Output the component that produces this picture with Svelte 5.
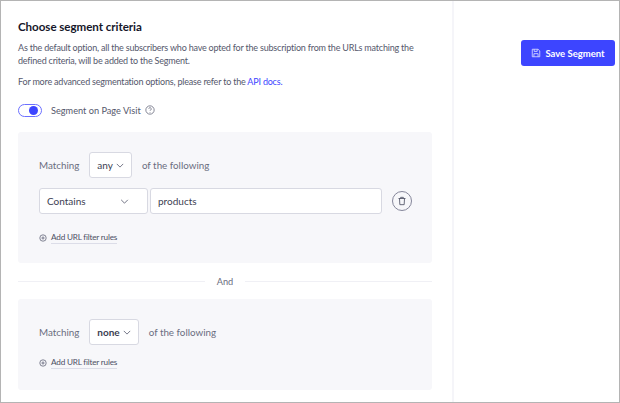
<script>
  // Segment criteria form with a save action in the side column.
  const groups = [
    { match: "any", rows: [{ type: "Contains", value: "products" }] },
    { match: "none", rows: [] },
  ];
</script>

<div class="frame">
  <main class="main">
    <h2>Choose segment criteria</h2>
    <p class="lead">
      As the default option, all the subscribers who have opted for the subscription from the URLs matching the
      defined criteria, will be added to the Segment.
    </p>
    <p class="more">For more advanced segmentation options, please refer to the <a href="#docs">API docs.</a></p>

    <div class="switch-row">
      <span class="switch"><span class="knob"></span></span>
      <span class="switch-label">Segment on Page Visit</span>
      <svg class="help" viewBox="0 0 12 12" width="10" height="10" fill="none" stroke="#5c5f73" stroke-width="0.9">
        <circle cx="6" cy="6" r="5" />
        <path d="M4.5 4.7a1.5 1.5 0 1 1 2.3 1.3c-.5.3-.8.6-.8 1.1" />
        <path d="M6 8.4v.8" />
      </svg>
    </div>

    {#each groups as group, i}
      {#if i > 0}
        <div class="divider"><span>And</span></div>
      {/if}
      <section class="panel" class:second={i > 0}>
        <div class="matching">
          <span>Matching</span>
          <span class="select small">
            {group.match}
            <svg viewBox="0 0 10 6" width="8" height="5" fill="none" stroke="#55586c" stroke-width="1"><path d="M1 1l4 4 4-4" /></svg>
          </span>
          <span>of the following</span>
        </div>
        {#each group.rows as row}
          <div class="rule">
            <span class="select type">
              {row.type}
              <svg viewBox="0 0 10 6" width="9" height="5" fill="none" stroke="#55586c" stroke-width="1"><path d="M1 1l4 4 4-4" /></svg>
            </span>
            <span class="input">{row.value}</span>
            <button class="trash" aria-label="Delete">
              <svg viewBox="0 0 12 12" width="10" height="10" fill="none" stroke="#4c4f63" stroke-width="1">
                <path d="M1.8 3h8.4M4.4 3V1.6h3.2V3M3 3l.4 7.4h5.2L9 3" />
              </svg>
            </button>
          </div>
        {/each}
        <div class="add">
          <svg viewBox="0 0 10 10" width="8" height="8" fill="none" stroke="#55586c" stroke-width="0.9">
            <circle cx="5" cy="5" r="4" /><path d="M5 3v4M3 5h4" />
          </svg>
          <span>Add URL filter rules</span>
        </div>
      </section>
    {/each}
  </main>

  <aside class="side">
    <button class="save">
      <svg viewBox="0 0 12 12" width="10" height="10" fill="none" stroke="#dfe0ff" stroke-width="1">
        <path d="M1.5 1.5h7l2 2v7h-9z" /><path d="M3.8 1.5v2.6h3.6V1.5M3.5 10.5V6.8h5v3.7" />
      </svg>
      Save Segment
    </button>
  </aside>
</div>

<style>
  :global(body) {
    margin: 0;
    background: #fff;
  }
  .frame {
    box-sizing: border-box;
    display: flex;
    width: 620px;
    height: 403px;
    border: 1px solid #b4b4b4;
    font-family: Lato, sans-serif;
    color: #55586c;
    overflow: hidden;
  }
  .main {
    box-sizing: border-box;
    width: 453px;
    height: 100%;
    padding: 18px 20px 0 17px;
    border-right: 2px solid #f5f5f9;
  }
  h2 {
    margin: 0;
    font-size: 11.6px;
    line-height: 16px;
    font-weight: 700;
    letter-spacing: -0.05px;
    color: #16172a;
  }
  p {
    margin: 0;
    font-size: 9px;
    line-height: 13px;
    letter-spacing: -0.2px;
  }
  .lead {
    margin-top: 6px;
  }
  .more {
    margin-top: 8px;
  }
  a {
    color: #3d45ff;
    text-decoration: none;
  }
  .switch-row {
    display: flex;
    align-items: center;
    margin-top: 15px;
    height: 14px;
  }
  .switch {
    box-sizing: border-box;
    display: flex;
    align-items: center;
    justify-content: flex-end;
    width: 24px;
    height: 13px;
    padding-right: 3px;
    border: 1px solid #6c70ff;
    border-radius: 7px;
  }
  .knob {
    width: 9px;
    height: 9px;
    border-radius: 50%;
    background: #3d45ff;
  }
  .switch-label {
    margin-left: 9px;
    font-size: 9.2px;
  }
  .help {
    margin-left: 4px;
  }
  .panel {
    box-sizing: border-box;
    height: 131px;
    margin-top: 15px;
    padding: 20px 20px 0 21px;
    border-radius: 3px;
    background: #f7f7fa;
  }
  .panel.second {
    height: 91px;
    margin-top: 0;
    padding-top: 20px;
  }
  .matching {
    display: flex;
    align-items: center;
    gap: 10px;
    font-size: 9.8px;
    color: #6a6d80;
  }
  .select,
  .input {
    box-sizing: border-box;
    display: flex;
    align-items: center;
    height: 26px;
    border: 1px solid #d8d9e2;
    border-radius: 3px;
    background: #fff;
    font-size: 10px;
    color: #3c3e52;
  }
  .select.small {
    gap: 3px;
    padding: 0 7px;
  }
  .second .select.small {
    font-weight: 700;
  }
  .rule {
    display: flex;
    align-items: center;
    margin-top: 10px;
  }
  .type {
    justify-content: space-between;
    width: 109px;
    padding: 0 18px 0 7px;
  }
  .input {
    width: 232px;
    margin-left: 2px;
    padding: 0 7px;
  }
  .trash {
    display: flex;
    align-items: center;
    justify-content: center;
    width: 20px;
    height: 20px;
    margin-left: 10px;
    padding: 0;
    border: 1px solid #85869a;
    border-radius: 50%;
    background: transparent;
  }
  .add {
    display: flex;
    align-items: center;
    gap: 4px;
    margin-top: 18px;
    font-size: 8.2px;
    letter-spacing: -0.2px;
    color: #4c4f63;
  }
  .second .add {
    margin-top: 12px;
  }
  .add span {
    padding-bottom: 1px;
    border-bottom: 1px solid #dcdde8;
  }
  .divider {
    display: flex;
    align-items: center;
    gap: 12px;
    height: 36px;
    font-size: 9.2px;
    color: #6a6d80;
  }
  .divider::before,
  .divider::after {
    content: "";
    flex: 1;
    border-top: 1px solid #f0f0f5;
  }
  .side {
    flex: 1;
    padding: 39px 5px 0 67px;
  }
  .save {
    display: flex;
    align-items: center;
    justify-content: center;
    gap: 4px;
    width: 94px;
    height: 26px;
    padding: 0;
    border: none;
    border-radius: 3px;
    background: #3d45ff;
    color: #fff;
    font-family: inherit;
    font-size: 9.5px;
    font-weight: 700;
  }
</style>
